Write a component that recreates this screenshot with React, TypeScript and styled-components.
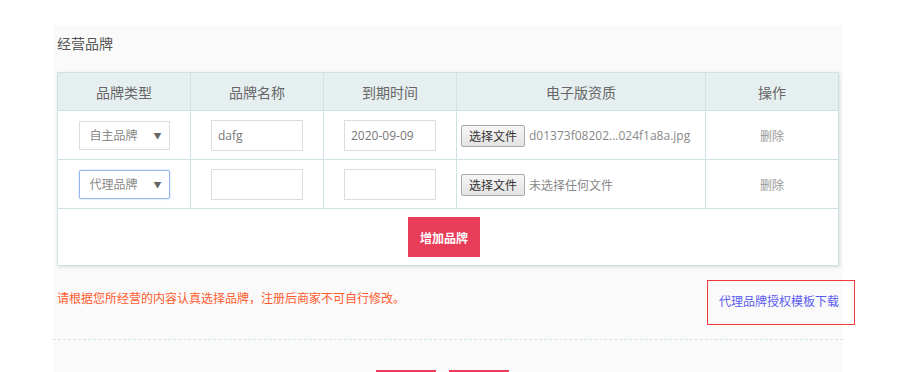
import styled, { createGlobalStyle } from "styled-components";

const GlobalStyle = createGlobalStyle`
  body {
    margin: 0;
    background: #ffffff;
    font-family: "Open Sans", "Noto Sans CJK SC", sans-serif;
  }
`;

type Brand = {
  type: string;
  name: string;
  date: string;
  file: string;
  focused?: boolean;
};

const brands: Brand[] = [
  { type: "自主品牌", name: "dafg", date: "2020-09-09", file: "d01373f08202...024f1a8a.jpg" },
  { type: "代理品牌", name: "", date: "", file: "未选择任何文件", focused: true },
];

const App = () => {
  return (
    <>
      <GlobalStyle />
      <Panel>
        <Title>经营品牌</Title>
        <Table>
          <thead>
            <tr>
              <Th $w={132}>品牌类型</Th>
              <Th $w={132}>品牌名称</Th>
              <Th $w={132}>到期时间</Th>
              <Th $w={248}>电子版资质</Th>
              <Th $w={132}>操作</Th>
            </tr>
          </thead>
          <tbody>
            {brands.map((b, i) => (
              <tr key={i}>
                <Td>
                  <SelectWrap $focused={b.focused}>
                    <span>{b.type}</span>
                    <Arrow>▼</Arrow>
                  </SelectWrap>
                </Td>
                <Td>
                  <TextInput defaultValue={b.name} />
                </Td>
                <Td>
                  <TextInput defaultValue={b.date} />
                </Td>
                <FileTd>
                  <FileButton>选择文件</FileButton>
                  <FileName>{b.file}</FileName>
                </FileTd>
                <Td>
                  <Delete>删除</Delete>
                </Td>
              </tr>
            ))}
            <tr>
              <AddTd colSpan={5}>
                <AddButton>增加品牌</AddButton>
              </AddTd>
            </tr>
          </tbody>
        </Table>
        <NoticeRow>
          <Warning>请根据您所经营的内容认真选择品牌，注册后商家不可自行修改。</Warning>
          <TemplateBox>
            <TemplateLink href="#">代理品牌授权模板下载</TemplateLink>
          </TemplateBox>
        </NoticeRow>
        <Footer>
          <StepButton aria-label="上一步" />
          <StepButton aria-label="下一步" />
        </Footer>
      </Panel>
    </>
  );
};

export default App;

const Panel = styled.div`
  width: 790px;
  margin: 25px 0 0 53px;
  background: #fafafa;
  padding-bottom: 40px;
`;

const Title = styled.div`
  height: 47px;
  line-height: 38px;
  padding-left: 4px;
  font-size: 14px;
  color: #555;
`;

const Table = styled.table`
  width: 781px;
  margin-left: 4px;
  border-collapse: collapse;
  table-layout: fixed;
  background: #fff;
  box-shadow: 1px 1px 3px rgba(0, 0, 0, 0.12);
`;

const Th = styled.th<{ $w: number }>`
  width: ${(p) => p.$w}px;
  height: 37px;
  padding: 0;
  background: #e6eff0;
  border: 1px solid #cfe1e4;
  font-size: 14px;
  font-weight: normal;
  color: #666;
  text-align: center;
`;

const Td = styled.td`
  height: 48px;
  padding: 0;
  border: 1px solid #cfe1e4;
  text-align: center;
  vertical-align: middle;
`;

const FileTd = styled(Td)`
  text-align: left;
  padding-left: 4px;
  white-space: nowrap;
  overflow: hidden;
`;

const AddTd = styled(Td)`
  height: 56px;
  padding-right: 8px;
`;

const SelectWrap = styled.div<{ $focused?: boolean }>`
  box-sizing: border-box;
  width: 91px;
  height: 29px;
  margin: 0 auto;
  display: flex;
  align-items: center;
  justify-content: space-between;
  padding: 0 7px 0 10px;
  background: #fff;
  border: 1px solid ${(p) => (p.$focused ? "#94b7ef" : "#dddddd")};
  border-radius: ${(p) => (p.$focused ? "2px" : "0")};
  box-shadow: ${(p) => (p.$focused ? "0 0 2px rgba(110, 150, 235, 0.5)" : "none")};
  font-size: 12px;
  color: #888;
`;

const Arrow = styled.span`
  font-size: 8px;
  color: #666;
`;

const TextInput = styled.input`
  box-sizing: border-box;
  width: 92px;
  height: 31px;
  padding: 0 6px;
  border: 1px solid #dddddd;
  outline: none;
  font-family: "Open Sans", "Noto Sans CJK SC", sans-serif;
  font-size: 12px;
  color: #777;
  display: block;
  margin: 0 auto;
`;

const FileButton = styled.button`
  box-sizing: border-box;
  width: 64px;
  height: 22px;
  padding: 0;
  border: 1px solid #a9a9a9;
  border-radius: 2px;
  background: linear-gradient(#f6f6f6, #e3e3e3);
  font-family: "Noto Sans CJK SC", sans-serif;
  font-size: 12px;
  color: #333;
  vertical-align: middle;
`;

const FileName = styled.span`
  margin-left: 4px;
  font-size: 12px;
  color: #888;
  vertical-align: middle;
`;

const Delete = styled.span`
  font-size: 12px;
  color: #999;
`;

const AddButton = styled.button`
  width: 72px;
  height: 40px;
  border: none;
  background: #e73d59;
  color: #fff;
  font-family: "Noto Sans CJK SC", sans-serif;
  font-size: 12px;
  font-weight: bold;
  vertical-align: middle;
`;

const NoticeRow = styled.div`
  display: flex;
  justify-content: space-between;
  align-items: flex-start;
  margin: 14px -12px 0 4px;
`;

const Warning = styled.div`
  margin-top: 9px;
  line-height: 20px;
  font-size: 12px;
  color: #ff5a2e;
`;

const TemplateBox = styled.div`
  box-sizing: border-box;
  width: 148px;
  height: 45px;
  padding: 8px 0 0 11px;
  border: 1px solid #f03a3a;
`;

const TemplateLink = styled.a`
  font-size: 12px;
  line-height: 20px;
  color: #5a5af0;
  text-decoration: none;
`;

const Footer = styled.div`
  display: flex;
  justify-content: center;
  gap: 13px;
  margin-top: 14px;
  padding: 30px 11px 0 0;
  border-top: 1px dashed #cfe4ec;
`;

const StepButton = styled.button`
  width: 60px;
  height: 36px;
  border: none;
  background: #e73d59;
`;
